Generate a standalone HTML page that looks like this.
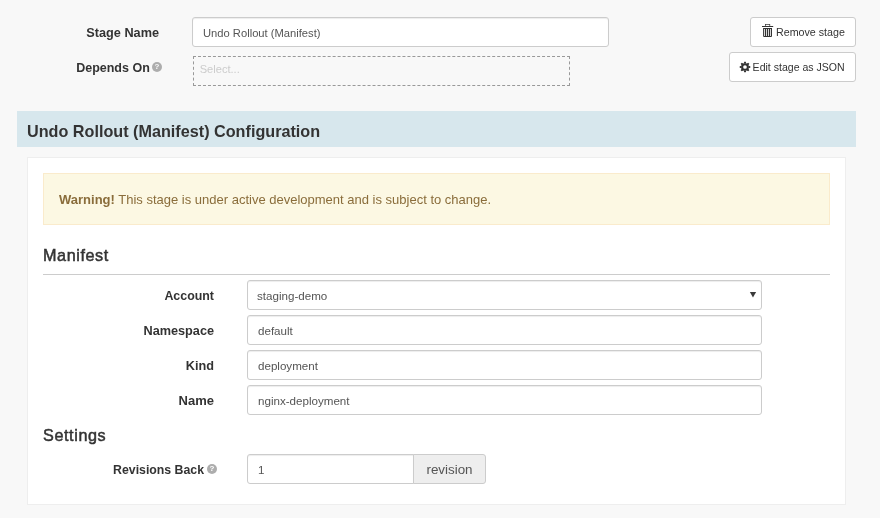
<!DOCTYPE html>
<html>
<head>
<meta charset="utf-8">
<title>Undo Rollout (Manifest)</title>
<style>
*{box-sizing:border-box;margin:0;padding:0}
html,body{width:880px;height:518px;overflow:hidden;background:#f8f8f8}
body{font-family:"Liberation Sans",sans-serif;color:#333}
#root{position:relative;width:880px;height:518px;background:#f8f8f8;will-change:transform}
.abs{position:absolute;white-space:nowrap}
.lbl{font-weight:bold;font-size:12.7px;text-align:right;line-height:16px;color:#333}
.inp{background:#fff;border:1px solid #ccc;border-radius:3px;box-shadow:inset 0 1px 1px rgba(0,0,0,.075);font-size:11.6px;color:#555;height:30px}
.inp span{position:absolute;left:10px;top:1px;line-height:28px}
.btn{background:#fff;border:1px solid #ccc;border-radius:3px;height:30px;font-size:10.7px;color:#333;line-height:28px}
.h4{font-size:17.5px;color:#333;line-height:20px}
.help{width:10px;height:10px;border-radius:50%;background:#adadad;color:#f8f8f8;font-size:8px;font-weight:bold;line-height:10.5px;text-align:center}
</style>
</head>
<body>
<div id="root">

<!-- Stage name row -->
<div class="abs lbl" style="left:60px;width:99px;top:25px">Stage Name</div>
<div class="abs inp" style="left:192px;top:17px;width:417px"><span style="font-size:11.2px">Undo Rollout (Manifest)</span></div>

<!-- Depends on row -->
<div class="abs lbl" style="left:50.8px;width:99px;top:60px;font-size:12.5px">Depends On</div>
<div class="abs help" style="left:152px;top:62px">?</div>
<div class="abs" style="left:193px;top:56px;width:377px;height:30px;border:1px dashed #999;font-size:11.1px;color:#ccc;line-height:25px;padding-left:5.7px">Select...</div>

<!-- Buttons -->
<div class="abs btn" style="left:750px;top:17px;width:106px">
  <svg class="abs" style="left:11px;top:6px" width="12" height="14" viewBox="0 0 12 14">
    <rect x="3.4" y=".35" width="4.4" height="2.2" fill="none" stroke="#333" stroke-width=".7"/>
    <rect x="0" y="2" width="11.2" height="1" fill="#333"/>
    <path d="M1.1 3.9h8.9v8q0 1-1 1H2.1q-1 0-1-1z" fill="#333"/>
    <path d="M2.1 4.9h.8v7.1h-.8zM4.1 4.9h.8v7.1h-.8zM6.1 4.9h.8v7.1h-.8zM8.1 4.9h.8v7.1h-.8z" fill="#fff"/>
  </svg>
  <span class="abs" style="left:25px;top:0">Remove stage</span>
</div>
<div class="abs btn" style="left:729px;top:52px;width:127px;font-size:10.55px">
  <svg class="abs" style="left:8.9px;top:7.5px" width="12" height="12" viewBox="-6 -6 12 12">
    <circle r="2.85" fill="none" stroke="#333" stroke-width="2"/>
    <g fill="#333">
      <path d="M-1.25 -3.4L-.8 -5.3H.8L1.25 -3.4z"/>
      <path d="M-1.25 -3.4L-.8 -5.3H.8L1.25 -3.4z" transform="rotate(45)"/>
      <path d="M-1.25 -3.4L-.8 -5.3H.8L1.25 -3.4z" transform="rotate(90)"/>
      <path d="M-1.25 -3.4L-.8 -5.3H.8L1.25 -3.4z" transform="rotate(135)"/>
      <path d="M-1.25 -3.4L-.8 -5.3H.8L1.25 -3.4z" transform="rotate(180)"/>
      <path d="M-1.25 -3.4L-.8 -5.3H.8L1.25 -3.4z" transform="rotate(225)"/>
      <path d="M-1.25 -3.4L-.8 -5.3H.8L1.25 -3.4z" transform="rotate(270)"/>
      <path d="M-1.25 -3.4L-.8 -5.3H.8L1.25 -3.4z" transform="rotate(315)"/>
    </g>
  </svg>
  <span class="abs" style="left:22.6px;top:0">Edit stage as JSON</span>
</div>

<!-- Section header bar -->
<div class="abs" style="left:17px;top:111px;width:839px;height:36px;background:#d7e7ed"></div>
<div class="abs h4" style="left:27px;top:121px;font-size:16.2px;font-weight:bold">Undo Rollout (Manifest) Configuration</div>

<!-- White panel -->
<div class="abs" style="left:27px;top:157px;width:819px;height:348px;background:#fff;border:1px solid #eee"></div>

<!-- Warning -->
<div class="abs" style="left:43px;top:173px;width:787px;height:52px;background:#fcf8e3;border:1px solid #faebcc;color:#8a6d3b;font-size:13px;line-height:50px;padding-left:15px"><span style="position:relative;top:1px"><b>Warning!</b> This stage is under active development and is subject to change.</span></div>

<!-- Manifest -->
<div class="abs h4" style="left:43px;top:245px;font-size:16.2px;letter-spacing:.58px;-webkit-text-stroke:.5px #333">Manifest</div>
<div class="abs" style="left:43px;top:274px;width:787px;height:1px;background:#ccc"></div>

<div class="abs lbl" style="left:114px;width:100px;top:288px;font-size:12.4px">Account</div>
<div class="abs inp" style="left:247px;top:280px;width:515px"><span style="left:9px">staging-demo</span>
  <svg class="abs" style="right:4px;top:10px" width="8" height="8" viewBox="0 0 8 8"><path d="M.9 1h6.2L4 6.6z" fill="#3a3a3a"/></svg>
</div>

<div class="abs lbl" style="left:114px;width:100px;top:323px">Namespace</div>
<div class="abs inp" style="left:247px;top:315px;width:515px"><span>default</span></div>

<div class="abs lbl" style="left:114px;width:100px;top:358px">Kind</div>
<div class="abs inp" style="left:247px;top:350px;width:515px"><span>deployment</span></div>

<div class="abs lbl" style="left:114px;width:100px;top:393px;font-size:13px">Name</div>
<div class="abs inp" style="left:247px;top:385px;width:515px"><span>nginx-deployment</span></div>

<!-- Settings -->
<div class="abs h4" style="left:43px;top:425px;font-size:16.2px;letter-spacing:.6px;-webkit-text-stroke:.5px #333">Settings</div>

<div class="abs lbl" style="left:104px;width:100px;top:462px;font-size:12.3px">Revisions Back</div>
<div class="abs help" style="left:207px;top:464px;color:#fff">?</div>
<div class="abs inp" style="left:247px;top:454px;width:167px;border-radius:3px 0 0 3px"><span>1</span></div>
<div class="abs" style="left:413px;top:454px;width:73px;height:30px;background:#eee;border:1px solid #ccc;border-radius:0 3px 3px 0;font-size:13.4px;color:#555;line-height:29px;text-align:center">revision</div>

</div>
</body>
</html>
